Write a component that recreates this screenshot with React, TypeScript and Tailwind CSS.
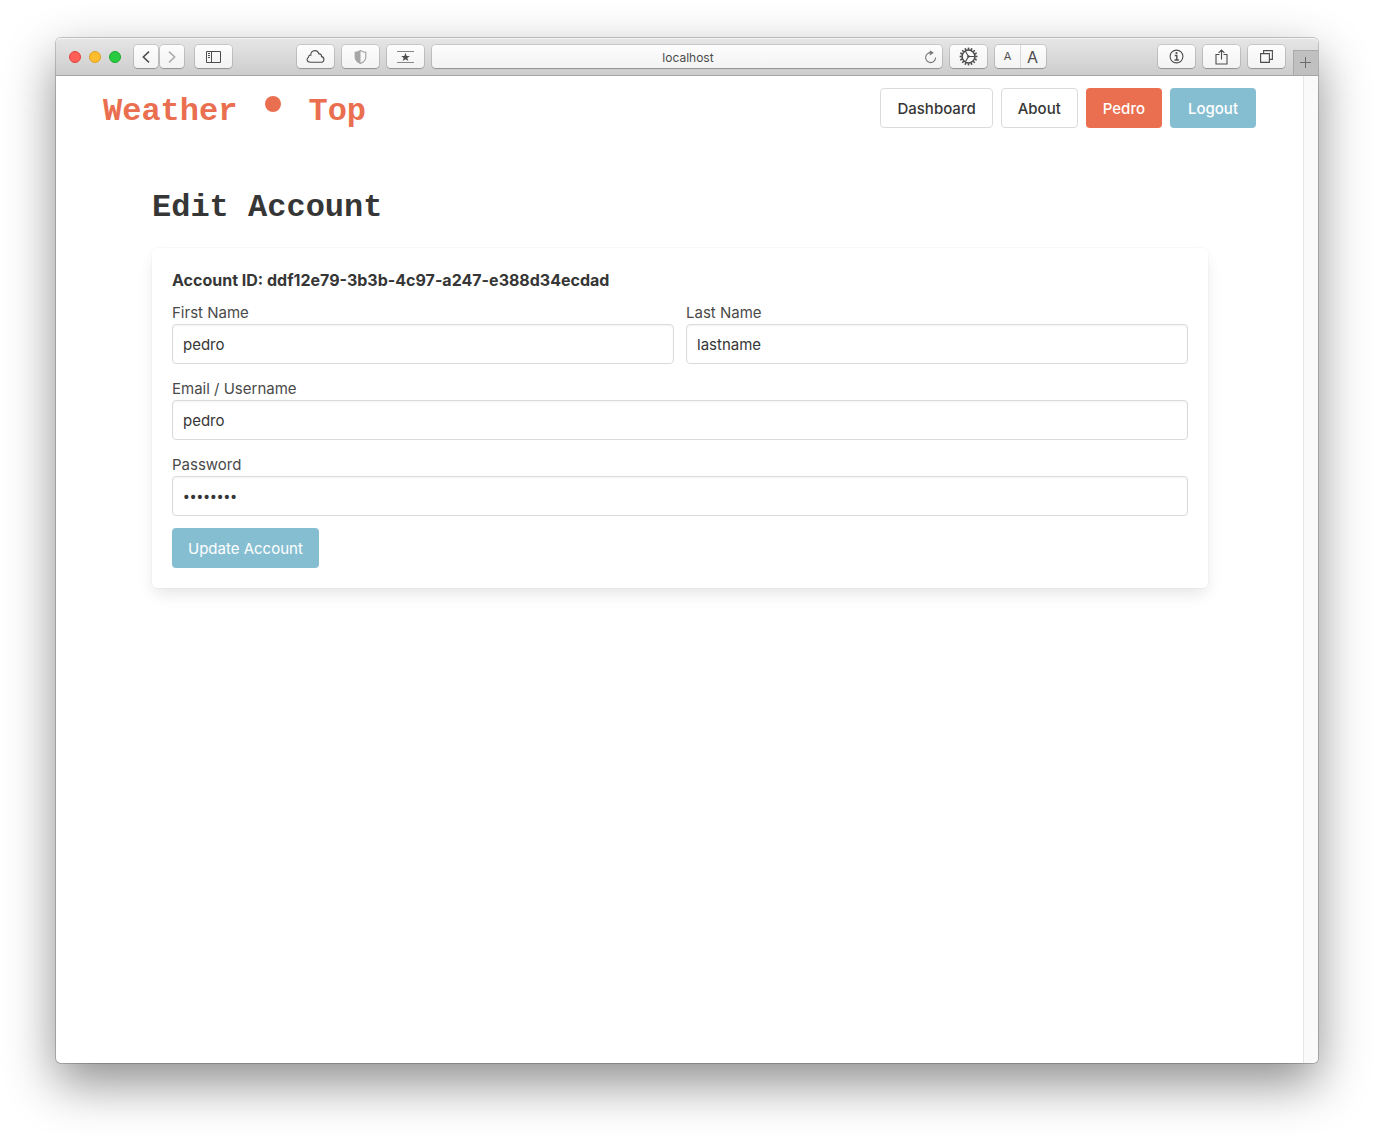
import type { ComponentPropsWithoutRef, ReactNode } from "react";

const toolButton =
  "flex h-[23px] w-[37px] shrink-0 items-center justify-center rounded bg-linear-to-b from-[#fdfdfd] to-[#f3f3f3] text-[#4c4c4c] shadow-[0_0_0_1px_rgba(0,0,0,0.11),0_1px_1px_rgba(0,0,0,0.22)]";

function ToolButton({ label, children }: { label: string; children: ReactNode }) {
  return (
    <button type="button" aria-label={label} className={toolButton}>
      {children}
    </button>
  );
}

function GearIcon() {
  const teeth = Array.from({ length: 16 }, (_, i) => i * 22.5);
  return (
    <svg width="19" height="19" viewBox="0 0 19 19" fill="none" stroke="currentColor">
      <circle cx="9.5" cy="9.5" r="6.4" strokeWidth="1.5" />
      {teeth.map((a) => (
        <path key={a} d="M9.5 0.6V2.8" strokeWidth="1.6" transform={`rotate(${a} 9.5 9.5)`} />
      ))}
      <path d="M9.5 9.5H15.6M9.5 9.5L6.4 4.2M9.5 9.5L6.4 14.8" strokeWidth="1.1" />
      <circle cx="9.5" cy="9.5" r="1.2" fill="currentColor" stroke="none" />
    </svg>
  );
}

function Toolbar() {
  return (
    <div className="flex h-[38px] shrink-0 items-center rounded-t-[5px] border-b border-[#a5a5a5] bg-linear-to-b from-[#e6e6e6] to-[#cdcdcd] pl-[13px] shadow-[inset_0_1px_0_#f4f4f4]">
      <div className="flex gap-2">
        <button type="button" aria-label="Close" className="size-3 rounded-full border border-[#e2443f] bg-[#ff5f57]" />
        <button type="button" aria-label="Minimize" className="size-3 rounded-full border border-[#e0a023] bg-[#ffbd2e]" />
        <button type="button" aria-label="Zoom" className="size-3 rounded-full border border-[#1cab2d] bg-[#28ca42]" />
      </div>
      <div className="ml-[13px] flex gap-0.5">
        <button
          type="button"
          aria-label="Back"
          className="flex h-[23px] w-6 items-center justify-center rounded bg-linear-to-b from-[#fdfdfd] to-[#f3f3f3] text-[#4c4c4c] shadow-[0_0_0_1px_rgba(0,0,0,0.11),0_1px_1px_rgba(0,0,0,0.22)]"
        >
          <svg width="8" height="12" viewBox="0 0 8 12" fill="none" stroke="currentColor" strokeWidth="1.5">
            <path d="M7 0.6L1.3 6L7 11.4" />
          </svg>
        </button>
        <button
          type="button"
          aria-label="Forward"
          className="flex h-[23px] w-6 items-center justify-center rounded bg-linear-to-b from-[#fdfdfd] to-[#f3f3f3] text-[#ababab] shadow-[0_0_0_1px_rgba(0,0,0,0.11),0_1px_1px_rgba(0,0,0,0.22)]"
        >
          <svg width="8" height="12" viewBox="0 0 8 12" fill="none" stroke="currentColor" strokeWidth="1.5">
            <path d="M1 0.6L6.7 6L1 11.4" />
          </svg>
        </button>
      </div>
      <div className="ml-[11px] flex">
        <ToolButton label="Show sidebar">
          <svg width="15" height="12" viewBox="0 0 15 12" fill="none" stroke="currentColor">
            <path d="M0.5 0.5H14.5V11.5H0.5ZM5.5 0.5V11.5M2 2.5H4M2 4.5H4M2 6.5H4" />
          </svg>
        </ToolButton>
      </div>
      <div className="ml-[65px] flex min-w-0 flex-1 gap-2">
        <ToolButton label="iCloud tabs">
          <svg width="19" height="13" viewBox="0 0 18 13" fill="none" stroke="currentColor" strokeWidth="1.1">
            <path d="M4.2 12.3H14.2C16.2 12.3 17.4 11 17.4 9.4C17.4 7.9 16.3 6.8 15 6.6C15.3 4.9 14 3.6 12.4 3.9C11.8 1.8 10.3 0.6 8.4 0.6C5.9 0.6 4.1 2.6 4.3 5.2C2.8 5 1.9 6.1 2.1 7.3C1.1 7.8 0.6 8.7 0.6 9.6C0.6 11.2 2 12.3 4.2 12.3Z" />
          </svg>
        </ToolButton>
        <ToolButton label="Privacy report">
          <svg width="13" height="14" viewBox="0 0 12 14" className="text-[#a6a6a6]">
            <path d="M6 0.6C7.6 1.8 9.3 2.3 11.3 2.3V7.2C11.3 10.1 9.2 12 6 13.4C2.8 12 0.7 10.1 0.7 7.2V2.3C2.7 2.3 4.4 1.8 6 0.6Z" fill="none" stroke="currentColor" strokeWidth="1.2" />
            <path d="M6 0.6V13.4C2.8 12 0.7 10.1 0.7 7.2V2.3C2.7 2.3 4.4 1.8 6 0.6Z" fill="currentColor" />
          </svg>
        </ToolButton>
        <ToolButton label="Favorites">
          <svg width="17" height="12" viewBox="0 0 17 12">
            <path d="M0 0.5H17M0 11.5H17" stroke="#858585" />
            <path d="M8.5 1.7L9.6 4.9H12.9L10.3 6.9L11.3 10.1L8.5 8.2L5.7 10.1L6.7 6.9L4.1 4.9H7.4Z" fill="currentColor" />
          </svg>
        </ToolButton>
        <div className="flex h-[23px] min-w-0 flex-1 items-center rounded bg-linear-to-b from-[#fdfdfd] to-[#f3f3f3] pl-5 pr-[5px] shadow-[0_0_0_1px_rgba(0,0,0,0.11),0_1px_1px_rgba(0,0,0,0.22)]">
          <input
            aria-label="Address"
            defaultValue="localhost"
            className="min-w-0 flex-1 bg-transparent pt-0.5 text-center text-[12px] leading-4 text-[#4c4c4c] outline-none"
          />
          <button type="button" aria-label="Reload" className="text-[#777]">
            <svg width="13" height="14" viewBox="0 0 13 14" fill="none" stroke="currentColor" strokeWidth="1.1">
              <path d="M7 2.6A5 5 0 1 0 11.6 7.6" />
              <path d="M5.8 0.2L9.8 2.8L5.8 5.6Z" fill="currentColor" stroke="none" />
            </svg>
          </button>
        </div>
        <ToolButton label="Settings">
          <GearIcon />
        </ToolButton>
        <div className="flex h-[23px] w-[51px] shrink-0 rounded bg-linear-to-b from-[#fdfdfd] to-[#f3f3f3] text-[#4c4c4c] shadow-[0_0_0_1px_rgba(0,0,0,0.11),0_1px_1px_rgba(0,0,0,0.22)]">
          <button type="button" aria-label="Smaller text" className="flex w-[26px] items-center justify-center border-r border-[#d8d8d8] text-[11px]">
            A
          </button>
          <button type="button" aria-label="Larger text" className="flex flex-1 items-center justify-center pr-0.5 text-base">
            A
          </button>
        </div>
      </div>
      <div className="ml-28 flex gap-2">
        <ToolButton label="Page info">
          <svg width="15" height="15" viewBox="0 0 15 15" fill="none" stroke="currentColor">
            <circle cx="7.5" cy="7.5" r="6.4" strokeWidth="1.1" />
            <path d="M5.8 6.5H7.8V11M5.5 11H9.8" strokeWidth="1.4" />
            <circle cx="7.5" cy="4" r="1.1" fill="currentColor" stroke="none" />
          </svg>
        </ToolButton>
        <ToolButton label="Share">
          <svg width="13" height="16" viewBox="0 0 13 16" fill="none" stroke="currentColor" strokeWidth="1.1">
            <path d="M4.5 5.5H1V15H12V5.5H8.5M6.5 10.5V1M3.6 3.9L6.5 1L9.4 3.9" />
          </svg>
        </ToolButton>
        <ToolButton label="Show all tabs">
          <svg width="13" height="13" viewBox="0 0 13 13" fill="none" stroke="currentColor" strokeWidth="1.1">
            <path d="M0.6 3.6H9.4V12.4H0.6ZM3.6 3.6V0.6H12.4V9.4H9.4" />
          </svg>
        </ToolButton>
      </div>
      <button
        type="button"
        aria-label="New tab"
        className="ml-2 flex h-[25px] w-[25px] items-center justify-center self-end border-l border-t border-[#a9a9a9] bg-[#c0c0c0] pr-0.5 pb-0.5 text-[#6a6a6a]"
      >
        <svg width="11" height="11" viewBox="0 0 11 11" stroke="currentColor">
          <path d="M5.5 0V11M0 5.5H11" />
        </svg>
      </button>
    </div>
  );
}

function Field({ label, id, ...rest }: { label: string; id: string } & ComponentPropsWithoutRef<"input">) {
  return (
    <div className="min-w-0">
      <label htmlFor={id} className="block pt-0.5 leading-[22px] text-[#4a4a4a]">
        {label}
      </label>
      <input
        id={id}
        className="block h-10 w-full rounded border border-[#dbdbdb] bg-white px-2.5 text-[#363636] shadow-[inset_0_1px_2px_rgba(10,10,10,0.05)] outline-none [&[type=password]]:pt-0.5 [&[type=password]]:font-[Roboto,sans-serif] [&[type=password]]:text-xl"
        {...rest}
      />
    </div>
  );
}

function Navbar() {
  return (
    <nav className="flex h-16 items-center justify-between px-[47px]">
      <a href="#" className="flex items-center font-['Liberation_Mono',monospace] text-[32px] leading-10 font-bold text-[#ea6f51]">
        <span className="pt-2">Weather</span>
        <svg width="32" height="32" viewBox="0 0 32 32" className="mr-[19px] ml-5 mb-2 self-end" aria-hidden="true">
          <circle cx="16" cy="12" r="8" fill="currentColor" />
        </svg>
        <span className="pt-2">Top</span>
      </a>
      <div className="flex gap-2 font-medium">
        <a href="#" className="flex h-10 items-center rounded border border-[#dbdbdb] px-4 pt-0.5 text-[#363636]">
          Dashboard
        </a>
        <a href="#" className="flex h-10 items-center rounded border border-[#dbdbdb] px-4 pt-0.5 text-[#363636]">
          About
        </a>
        <a href="#" className="flex h-10 items-center rounded bg-[#ea6f51] px-[17px] pt-0.5 text-white">
          Pedro
        </a>
        <a href="#" className="flex h-10 items-center rounded bg-[#86bed1] px-[18px] pt-0.5 text-white">
          Logout
        </a>
      </div>
    </nav>
  );
}

export default function App() {
  return (
    <div className="flex min-h-screen flex-col bg-white px-14 pt-[38px] pb-[74px] font-[Inter,sans-serif]">
      <div className="flex flex-1 flex-col rounded-[5px] bg-white shadow-[0_0_0_1px_rgba(0,0,0,0.2),0_20px_50px_rgba(0,0,0,0.45)]">
        <Toolbar />
        <div className="flex flex-1">
          <div className="min-w-0 flex-1 text-[15px] leading-6">
            <Navbar />
            <main className="pt-12 pr-[95px] pl-24">
              <h1 className="font-['Liberation_Mono',monospace] text-[32px] leading-10 font-bold text-[#363636]">Edit Account</h1>
              <form className="mt-5 rounded-md p-5 shadow-[0_8px_16px_-2px_rgba(10,10,10,0.1),0_0_0_1px_rgba(10,10,10,0.02)]">
                <h2 className="text-base leading-6 font-bold text-[#363636]">Account ID: ddf12e79-3b3b-4c97-a247-e388d34ecdad</h2>
                <div className="mt-2 grid gap-3">
                  <div className="grid grid-cols-2 gap-3">
                    <Field label="First Name" id="first-name" type="text" defaultValue="pedro" />
                    <Field label="Last Name" id="last-name" type="text" defaultValue="lastname" />
                  </div>
                  <Field label="Email / Username" id="email" type="text" defaultValue="pedro" />
                  <Field label="Password" id="password" type="password" defaultValue="password" />
                  <button type="button" className="h-10 justify-self-start rounded bg-[#86bed1] px-4 pt-0.5 text-white">
                    Update Account
                  </button>
                </div>
              </form>
            </main>
          </div>
          <div className="w-[15px] rounded-br-[5px] border-l border-[#e6e6e6] bg-[#fafafa]" />
        </div>
      </div>
    </div>
  );
}
